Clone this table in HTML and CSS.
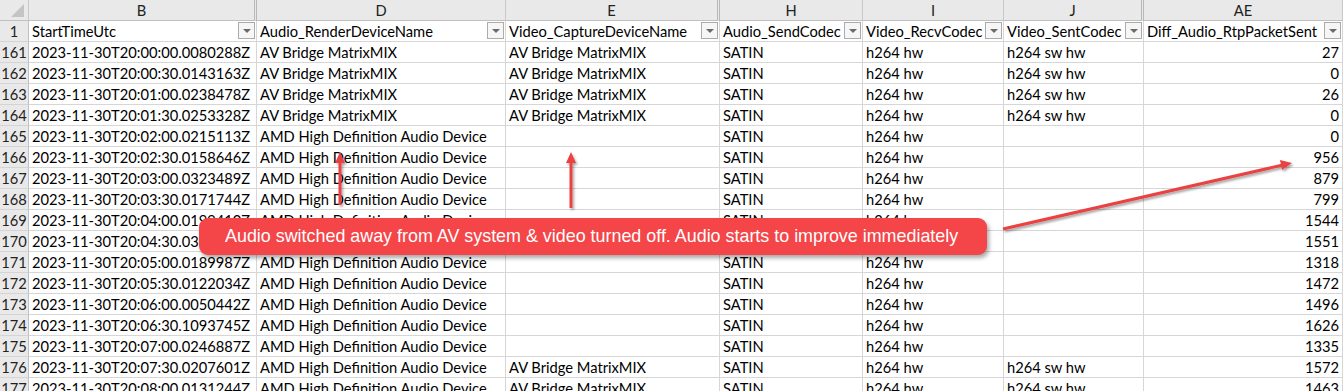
FILE: index.html
```html
<!DOCTYPE html>
<html>
<head>
<meta charset="utf-8">
<link rel="stylesheet" href="styles.css">
</head>
<body>
<div class="page">
  <div class="sheet">
    <div class="ch corner"><span class="tri"></span></div>
    <div class="ch hid">B</div>
    <div class="ch">D</div>
    <div class="ch hid">E</div>
    <div class="ch">H</div>
    <div class="ch">I</div>
    <div class="ch hid">J</div>
    <div class="ch">AE</div>

    <div class="rn">1</div>
    <div class="c hd">StartTimeUtc<span class="fb"></span></div>
    <div class="c hd">Audio_RenderDeviceName<span class="fb"></span></div>
    <div class="c hd">Video_CaptureDeviceName<span class="fb"></span></div>
    <div class="c hd">Audio_SendCodec<span class="fb"></span></div>
    <div class="c hd">Video_RecvCodec<span class="fb"></span></div>
    <div class="c hd">Video_SentCodec<span class="fb"></span></div>
    <div class="c hd">Diff_Audio_RtpPacketSent<span class="fb"></span></div>

    <div class="rn">161</div><div class="c">2023-11-30T20:00:00.0080288Z</div><div class="c">AV Bridge MatrixMIX</div><div class="c">AV Bridge MatrixMIX</div><div class="c">SATIN</div><div class="c">h264 hw</div><div class="c">h264 sw hw</div><div class="c n">27</div>
    <div class="rn">162</div><div class="c">2023-11-30T20:00:30.0143163Z</div><div class="c">AV Bridge MatrixMIX</div><div class="c">AV Bridge MatrixMIX</div><div class="c">SATIN</div><div class="c">h264 hw</div><div class="c">h264 sw hw</div><div class="c n">0</div>
    <div class="rn">163</div><div class="c">2023-11-30T20:01:00.0238478Z</div><div class="c">AV Bridge MatrixMIX</div><div class="c">AV Bridge MatrixMIX</div><div class="c">SATIN</div><div class="c">h264 hw</div><div class="c">h264 sw hw</div><div class="c n">26</div>
    <div class="rn">164</div><div class="c">2023-11-30T20:01:30.0253328Z</div><div class="c">AV Bridge MatrixMIX</div><div class="c">AV Bridge MatrixMIX</div><div class="c">SATIN</div><div class="c">h264 hw</div><div class="c">h264 sw hw</div><div class="c n">0</div>
    <div class="rn">165</div><div class="c">2023-11-30T20:02:00.0215113Z</div><div class="c">AMD High Definition Audio Device</div><div class="c"></div><div class="c">SATIN</div><div class="c">h264 hw</div><div class="c"></div><div class="c n">0</div>
    <div class="rn">166</div><div class="c">2023-11-30T20:02:30.0158646Z</div><div class="c">AMD High Definition Audio Device</div><div class="c"></div><div class="c">SATIN</div><div class="c">h264 hw</div><div class="c"></div><div class="c n">956</div>
    <div class="rn">167</div><div class="c">2023-11-30T20:03:00.0323489Z</div><div class="c">AMD High Definition Audio Device</div><div class="c"></div><div class="c">SATIN</div><div class="c">h264 hw</div><div class="c"></div><div class="c n">879</div>
    <div class="rn">168</div><div class="c">2023-11-30T20:03:30.0171744Z</div><div class="c">AMD High Definition Audio Device</div><div class="c"></div><div class="c">SATIN</div><div class="c">h264 hw</div><div class="c"></div><div class="c n">799</div>
    <div class="rn">169</div><div class="c">2023-11-30T20:04:00.0199410Z</div><div class="c">AMD High Definition Audio Device</div><div class="c"></div><div class="c">SATIN</div><div class="c">h264 hw</div><div class="c"></div><div class="c n">1544</div>
    <div class="rn">170</div><div class="c">2023-11-30T20:04:30.0308522Z</div><div class="c">AMD High Definition Audio Device</div><div class="c"></div><div class="c">SATIN</div><div class="c">h264 hw</div><div class="c"></div><div class="c n">1551</div>
    <div class="rn">171</div><div class="c">2023-11-30T20:05:00.0189987Z</div><div class="c">AMD High Definition Audio Device</div><div class="c"></div><div class="c">SATIN</div><div class="c">h264 hw</div><div class="c"></div><div class="c n">1318</div>
    <div class="rn">172</div><div class="c">2023-11-30T20:05:30.0122034Z</div><div class="c">AMD High Definition Audio Device</div><div class="c"></div><div class="c">SATIN</div><div class="c">h264 hw</div><div class="c"></div><div class="c n">1472</div>
    <div class="rn">173</div><div class="c">2023-11-30T20:06:00.0050442Z</div><div class="c">AMD High Definition Audio Device</div><div class="c"></div><div class="c">SATIN</div><div class="c">h264 hw</div><div class="c"></div><div class="c n">1496</div>
    <div class="rn">174</div><div class="c">2023-11-30T20:06:30.1093745Z</div><div class="c">AMD High Definition Audio Device</div><div class="c"></div><div class="c">SATIN</div><div class="c">h264 hw</div><div class="c"></div><div class="c n">1626</div>
    <div class="rn">175</div><div class="c">2023-11-30T20:07:00.0246887Z</div><div class="c">AMD High Definition Audio Device</div><div class="c"></div><div class="c">SATIN</div><div class="c">h264 hw</div><div class="c"></div><div class="c n">1335</div>
    <div class="rn">176</div><div class="c">2023-11-30T20:07:30.0207601Z</div><div class="c">AMD High Definition Audio Device</div><div class="c">AV Bridge MatrixMIX</div><div class="c">SATIN</div><div class="c">h264 hw</div><div class="c">h264 sw hw</div><div class="c n">1572</div>
    <div class="rn">177</div><div class="c">2023-11-30T20:08:00.0131244Z</div><div class="c">AMD High Definition Audio Device</div><div class="c">AV Bridge MatrixMIX</div><div class="c">SATIN</div><div class="c">h264 hw</div><div class="c">h264 sw hw</div><div class="c n">1463</div>
  </div>

  <svg class="arrows" width="1343" height="391" viewBox="0 0 1343 391">
    <defs>
      <filter id="sh" x="-20%" y="-20%" width="140%" height="140%">
        <feDropShadow dx="1.5" dy="2" stdDeviation="1.2" flood-color="#000" flood-opacity="0.35"/>
      </filter>
    </defs>
    <g filter="url(#sh)" fill="#ea4242" stroke="#ea4242">
      <line x1="340" y1="205" x2="340" y2="160" stroke-width="3"/>
      <polygon points="340,152 335,163 345,163" stroke="none"/>
      <line x1="571" y1="208" x2="571" y2="160" stroke-width="3"/>
      <polygon points="571,152 566,163 576,163" stroke="none"/>
      <line x1="1003" y1="229" x2="1283" y2="165" stroke-width="3"/>
      <polygon points="1292,163 1280,160 1282,170" stroke="none"/>
    </g>
  </svg>

  <div class="callout">Audio switched away from AV system &amp; video turned off. Audio starts to improve immediately</div>
</div>
</body>
</html>
```

FILE: styles.css
```css
* { box-sizing: border-box; }
html, body { margin: 0; padding: 0; background: #fff; }
.page {
  position: relative;
  width: 1343px;
  height: 391px;
  overflow: hidden;
}
.sheet {
  display: grid;
  grid-template-columns: 29px 228px 249px 214px 143px 141px 140px 199px;
  grid-auto-rows: 21px;
  font-family: Lato, "Open Sans", sans-serif;
  font-size: 14.7px;
  color: #000;
}
.ch {
  background: #e9e9e9;
  border-right: 1px solid #c8c8c8;
  border-bottom: 1px solid #c0c0c0;
  color: #222;
  font-size: 14.7px;
  display: flex;
  align-items: center;
  justify-content: center;
}
.ch.hid { border-right: 3px double #b8b8b8; }
.corner { position: relative; }
.corner .tri {
  position: absolute;
  right: 4px;
  bottom: 3px;
  width: 0;
  height: 0;
  border-left: 13px solid transparent;
  border-bottom: 13px solid #c4c4c4;
}
.rn {
  background: #e9e9e9;
  border-right: 1px solid #c0c0c0;
  border-bottom: 1px solid #d4d4d4;
  display: flex;
  align-items: center;
  justify-content: center;
  color: #222;
  font-size: 14.7px;
}
.c {
  border-right: 1px solid #d6d6d6;
  border-bottom: 1px solid #d6d6d6;
  padding: 0 3px;
  display: flex;
  align-items: center;
  white-space: nowrap;
  overflow: hidden;
  position: relative;
}
.c.n { justify-content: flex-end; }
.c.hd { padding-right: 20px; }
.fb {
  position: absolute;
  right: 1px;
  top: 1px;
  width: 17px;
  height: 17px;
  border: 1px solid #ababab;
  background: #f6f6f6;
}
.fb::after {
  content: "";
  position: absolute;
  left: 4px;
  top: 6px;
  border-left: 4px solid transparent;
  border-right: 4px solid transparent;
  border-top: 4px solid #6a6a6a;
}
.arrows {
  position: absolute;
  left: 0;
  top: 0;
  pointer-events: none;
}
.callout {
  position: absolute;
  left: 199px;
  top: 218px;
  width: 788px;
  height: 37px;
  border-radius: 9px;
  background: #f44548;
  box-shadow: 2px 3px 4px rgba(0, 0, 0, 0.35);
  color: #fff;
  font-family: "Liberation Sans", Arial, sans-serif;
  font-size: 17.9px;
  display: flex;
  align-items: center;
  padding-left: 26px;
  white-space: nowrap;
}
```
